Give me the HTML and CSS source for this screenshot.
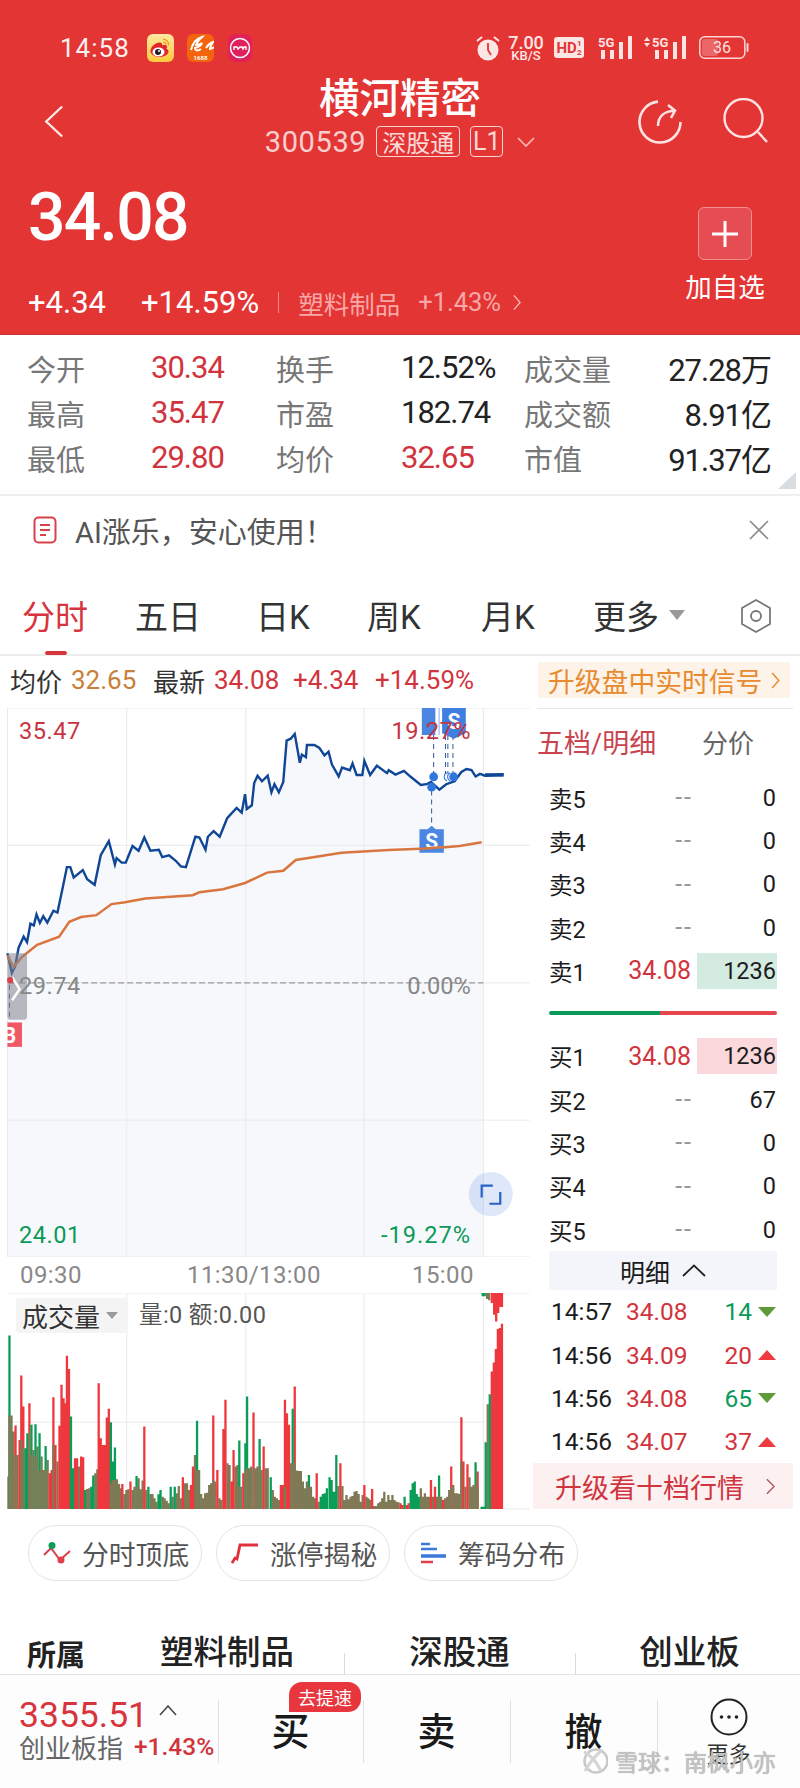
FILE: index.html
```html
<!DOCTYPE html>
<html lang="zh-CN">
<head>
<meta charset="utf-8">
<title>横河精密</title>
<link rel="stylesheet" href="styles.css">
</head>
<body>
<div class="page">
  <header class="hero">
    <div class="status">
      <span class="clock">14:58</span>
      <svg class="app app-weibo" viewBox="0 0 27 28"><defs><linearGradient id="wb" x1="0" y1="0" x2="0" y2="1"><stop offset="0" stop-color="#ffe9a0"/><stop offset="1" stop-color="#fdc93c"/></linearGradient></defs><rect width="27" height="28" rx="6" fill="url(#wb)"/><path d="M3.5 17c0-4 5-8.500 9-8.500 2.500 0 3 1.500 2.500 3 3-1 5-.5 5 1.500 0 .7-.3 1.200-.8 1.700 1.500.5 2.300 1.500 2.300 2.800 0 3-4.500 5.500-9 5.500S3.500 20.500 3.500 17z" fill="#e0262b"/><ellipse cx="11.500" cy="18" rx="6" ry="4.500" fill="#fff"/><circle cx="11" cy="18" r="3" fill="#222"/><circle cx="12" cy="17" r="1" fill="#fff"/><path d="M16 5.500c3-.5 6 2 5.500 6M16.500 8.500c1.500-.2 2.700 1 2.500 2.700" fill="none" stroke="#f39a1c" stroke-width="1.300"/></svg>
      <svg class="app app-ali" viewBox="0 0 27 28"><rect width="27" height="28" rx="6" fill="#f3640c"/><path d="M4 16C6 8 11 4 15 3c-3 3-5 4-6 8 3 0 5-1 6-2-1 3-3 4-7 5 0 3 3 3 6 1M19 14c2-3 4-5 7-6-2 3-3 5-3 7 1 0 2-.5 4-1.500" fill="none" stroke="#fff" stroke-width="2"/><text x="13.500" y="26" class="app-label">1688</text></svg>
      <svg class="app app-ring" viewBox="0 0 24 28"><rect width="24" height="28" rx="8" fill="#e0205a"/><circle cx="12" cy="14" r="9.500" fill="none" stroke="#fff" stroke-width="1.500"/><path d="M6 16v-3h3l1 2 2-2h2l1 2 1-2h2v3" fill="none" stroke="#fff" stroke-width="1.400"/></svg>
      <div class="status-right">
        <svg class="st-alarm" viewBox="0 0 24 26"><circle cx="12" cy="15" r="10.500" fill="#fde7e5"/><path d="M12 8v7l3 5" fill="none" stroke="#e43535" stroke-width="1.800"/><path d="M1 6l5-4M23 6l-5-4" stroke="#fde7e5" stroke-width="2"/></svg>
        <div class="st-net"><span class="st-rate">7.00</span><span class="st-unit">KB/S</span></div>
        <div class="st-hd"><span>HD</span><span class="st-frac">1<br>2</span></div>
        <svg class="st-sig" viewBox="0 0 35 23"><text x="0" y="11" class="sig-label">5G</text><path d="M3 14h4v9H3zM12 14h4v9h-4zM21 6h4v17h-4zM30 0h4v23h-4z" fill="#fde3e2"/></svg>
        <svg class="st-sig2" viewBox="0 0 44 23"><path d="M1 5l3-4 3 4zM1 7l3 4 3-4z" fill="#fde3e2"/><text x="9" y="11" class="sig-label">5G</text><path d="M12 14h4v9h-4zM21 14h4v9h-4zM30 6h4v17h-4zM39 0h4v23h-4z" fill="#fde3e2"/></svg>
        <svg class="st-batt" viewBox="0 0 50 23"><rect x=".8" y=".8" width="45" height="21.400" rx="5" fill="none" stroke="#fbd5d3" stroke-width="1.500"/><rect x="3" y="3" width="16" height="17" rx="3" fill="#fff" fill-opacity=".25"/><rect x="47.500" y="7" width="2" height="9" rx="1" fill="#fbd5d3"/><text x="23" y="17" class="batt-label">36</text></svg>
      </div>
    </div>
    <div class="nav">
      <div class="nav-left">
        <svg class="ic-back" viewBox="0 0 22 36"><path d="M20 1.500L2.500 18 20 34.500" fill="none" stroke="#fde8e6" stroke-width="2.600"/></svg>
      </div>
      <div class="nav-center">
        <h1 class="title">横河精密</h1>
        <div class="code-row">
          <span class="code">300539</span>
          <span class="tag-box tag-wide">深股通</span>
          <span class="tag-box tag-small">L1</span>
          <svg class="ic-caret" viewBox="0 0 18 10"><path d="M1 1l8 8 8-8" fill="none" stroke="#f6bdbb" stroke-width="1.600"/></svg>
        </div>
      </div>
      <div class="nav-right">
        <svg class="ic-refresh" viewBox="0 0 44 44"><path d="M20 1.600A20.500 20.500 0 1 0 42.500 22" fill="none" stroke="#fde3e2" stroke-width="2.600"/><path d="M20 26c0-9 6-15 17-15.500M30 5l7 5.500-4 7.500" fill="none" stroke="#fde3e2" stroke-width="2.600"/></svg>
        <svg class="ic-search" viewBox="0 0 46 46"><circle cx="20.500" cy="20" r="19" fill="none" stroke="#fde3e2" stroke-width="2.400"/><path d="M35 34l9 10" stroke="#fde3e2" stroke-width="2.400"/></svg>
      </div>
    </div>
    <div class="quote">
      <div class="quote-main">
        <div class="last">34.08</div>
        <div class="delta">
          <span class="delta-a">+4.34</span>
          <span class="delta-b">+14.59%</span>
          <span class="sector">塑料制品</span>
          <span class="sector-chg">+1.43%</span>
          <svg class="ic-next" viewBox="0 0 9 18"><path d="M1 1l7 8-7 8" fill="none" stroke="#f6b9b7" stroke-width="1.500"/></svg>
        </div>
      </div>
      <div class="quote-add">
        <div class="add-box"><svg class="ic-plus" viewBox="0 0 28 28"><path d="M14 1v26M1 14h26" stroke="#fff" stroke-width="3"/></svg></div>
        <div class="add-label">加自选</div>
      </div>
    </div>
  </header>

  <section class="stats">
    <span class="lbl">今开</span><span class="val up">30.34</span>
    <span class="lbl">换手</span><span class="val">12.52%</span>
    <span class="lbl">成交量</span><span class="val end">27.28万</span>
    <span class="lbl">最高</span><span class="val up">35.47</span>
    <span class="lbl">市盈</span><span class="val">182.74</span>
    <span class="lbl">成交额</span><span class="val end">8.91亿</span>
    <span class="lbl">最低</span><span class="val up">29.80</span>
    <span class="lbl">均价</span><span class="val up">32.65</span>
    <span class="lbl">市值</span><span class="val end">91.37亿</span>
    <i class="corner"></i>
  </section>

  <section class="notice">
    <svg class="ic-doc" viewBox="0 0 24 28"><rect x="1.500" y="1.500" width="21" height="25" rx="4" fill="none" stroke="#d8404a" stroke-width="2"/><path d="M7 9h10M7 14h10M7 19h6" stroke="#d8404a" stroke-width="2"/></svg>
    <span class="notice-text">AI涨乐，安心使用！</span>
    <svg class="ic-close" viewBox="0 0 20 20"><path d="M1 1l18 18M19 1L1 19" stroke="#8c8c8c" stroke-width="1.700"/></svg>
  </section>

  <nav class="tabs">
    <span class="tab active">分时</span>
    <span class="tab">五日</span>
    <span class="tab">日K</span>
    <span class="tab">周K</span>
    <span class="tab">月K</span>
    <span class="tab">更多<i class="tri"></i></span>
    <svg class="ic-hex" viewBox="0 0 32 34"><path d="M16 1l14 8v16l-14 8-14-8V9z" fill="none" stroke="#777" stroke-width="1.800" stroke-linejoin="round"/><circle cx="16" cy="17" r="5" fill="none" stroke="#777" stroke-width="1.800"/></svg>
  </nav>

  <section class="info">
    <span class="info-k">均价</span><span class="info-avg">32.65</span>
    <span class="info-k k2">最新</span><span class="up i-last">34.08</span>
    <span class="up i-d1">+4.34</span><span class="up i-d2">+14.59%</span>
    <span class="upgrade">升级盘中实时信号<svg class="ic-up-next" viewBox="0 0 9 18"><path d="M1 1l7 8-7 8" fill="none" stroke="#e88a2f" stroke-width="1.500"/></svg></span>
  </section>

  <main class="main">
    <div class="chart-col">
      <div class="chart">
        <svg class="chart-svg" viewBox="0 22 1568 1484" preserveAspectRatio="none">
          <path d="M22 700L35 738 45 720 55 670 70 640 80 655 90 605 100 610 108 580 118 603 128 585 140 602 158 570 170 575 185 510 198 452 208 452 218 480 245 460 258 485 280 500 298 420 322 382 340 445 345 428 360 440 372 440 392 395 410 408 427 372 445 408 470 405 480 425 500 420 520 435 535 450 550 452 578 370 590 372 608 405 615 370 632 355 650 370 672 320 700 292 715 305 725 255 730 295 745 285 752 225 762 205 775 220 792 205 803 250 812 228 825 250 838 222 848 110 860 105 872 92 887 170 893 148 905 155 908 122 930 122 945 130 960 150 972 140 982 175 1002 207 1012 183 1035 190 1043 172 1055 203 1072 203 1078 165 1095 203 1115 178 1145 198 1150 190 1170 202 1195 192 1215 208 1245 230 1262 228 1275 222 1300 243 1320 228 1345 220 1365 195 1380 187 1395 190 1407 207 1420 200 1430 205V1506H22z" fill="#f7f8fc"/>
          <path class="grid" d="M375 22V1506M727 22V1506M1077 22V1506M1430 22V1506M22 393H1568M22 765H1568M22 1136H1568M22 22H1568M22 22V1506M22 1506H1568"/>
          <path class="dash" d="M30 765H1430"/>
          <path class="line-price" d="M22 685L35 738 45 720 55 670 70 640 80 655 90 605 100 610 108 580 118 603 128 585 140 602 158 570 170 575 185 510 198 452 208 452 218 480 245 460 258 485 280 500 298 420 322 382 340 445 345 428 360 440 372 440 392 395 410 408 427 372 445 408 470 405 480 425 500 420 520 435 535 450 550 452 578 370 590 372 608 405 615 370 632 355 650 370 672 320 700 292 715 305 725 255 730 295 745 285 752 225 762 205 775 220 792 205 803 250 812 228 825 250 838 222 848 110 860 105 872 92 887 170 893 148 905 155 908 122 930 122 945 130 960 150 972 140 982 175 1002 207 1012 183 1035 190 1043 172 1055 203 1072 203 1078 165 1095 203 1115 178 1145 198 1150 190 1170 202 1195 192 1215 208 1245 230 1262 228 1275 222 1300 243 1320 228 1345 220 1365 195 1380 187 1395 190 1407 207 1420 200 1435 205 1490 201"/>
          <path class="line-thick" d="M1435 203H1490"/>
          <path class="line-avg" d="M22 690L40 722 65 695 110 662 175 640 205 600 240 587 285 582 330 552 370 547 430 537 570 528 590 520 660 512 725 495 790 467 838 462 875 433 950 422 1010 413 1150 406 1280 401 1360 395 1425 385"/>
          <path class="flag-dash" d="M1283 95V200M1318 95V200M1325 95V200M1340 95V200M1277 245V340M28 770V860"/>
          <path d="M1248 22H1300V95H1248z" fill="#4a86e2"/>
          <path d="M1288 22H1298V95H1288zM1302 22H1306V95H1302z" fill="#fff"/>
          <path d="M1308 22H1378V90L1343 105 1308 90z" fill="#3f7fe0"/>
          <text x="1343" y="78" class="flag-s">S</text>
          <path d="M1241 350H1265L1277 340 1289 350H1313V413H1241z" fill="#4a86e2"/>
          <text x="1277" y="402" class="flag-s">S</text>
          <path class="line-avg" d="M1241 403L1313 398"/>
          <ellipse cx="1283" cy="208" rx="13" ry="12" fill="#2f77dd"/>
          <ellipse cx="1277" cy="236" rx="13" ry="12" fill="#2f77dd"/>
          <path d="M1322 197a13 12 0 0 0 0 22M1332 197a13 12 0 0 0 0 22" fill="none" stroke="#2f77dd" stroke-width="3"/>
          <ellipse cx="1342" cy="208" rx="13" ry="12" fill="#2f77dd"/>
          <rect x="22" y="685" width="58" height="180" rx="10" fill="#84848c" fill-opacity=".55"/>
          <path d="M36 750L58 782 36 812" fill="none" stroke="#fff" stroke-width="2.500" vector-effect="non-scaling-stroke"/>
          <circle cx="30" cy="758" r="9" fill="#e0404c"/>
          <path d="M22 872H65V938H22z" fill="#f25766"/>
          <text x="28" y="928" class="flag-s">B</text>
          <ellipse cx="1452" cy="1336" rx="65" ry="60" fill="#3a78dc" fill-opacity=".17"/>
          <path class="expand" d="M1425 1345V1313H1458M1480 1330V1362H1448"/>
        </svg>
        <span class="ax ax-tl up">35.47</span>
        <span class="ax ax-tr up">19.27%</span>
        <span class="ax ax-ml">29.74</span>
        <span class="ax ax-mr">0.00%</span>
        <span class="ax ax-bl down">24.01</span>
        <span class="ax ax-br down">-19.27%</span>
      </div>
      <div class="times"><span>09:30</span><span>11:30/13:00</span><span>15:00</span></div>
      <div class="vol">
        <svg class="vol-svg" viewBox="0 70 1568 650" preserveAspectRatio="none">
          <path class="grid" d="M375 70V717M727 70V717M1077 70V717M1430 70V717M22 457H1430M22 70H1568M1490 717H1568"/>
          <path class="bar-b" d="M25 717V620M34 717V437M40 717V485M52 717V555M99 717V540M111 717V530M123 717V560M129 717V600M141 717V570M170 717V575M234 717V590M258 717V657M264 717V655M282 717V610M288 717V598M346 717V628M352 717V642M358 717V655M368 717V672M374 717V660M380 717V658M392 717V660M398 717V650M410 717V625M416 717V658M422 717V632M433 717V660M445 717V672M451 717V672M457 717V685M463 717V695M481 717V680M487 717V685M493 717V692M499 717V700M511 717V680M523 717V670M529 717V648M535 717V685M547 717V640M553 717V640M559 717V660M577 717V555M589 717V600M595 717V672M601 717V685M607 717V670M613 717V668M619 717V645M625 717V640M637 717V635M649 717V685M655 717V690M673 717V580M679 717V585M697 717V590M703 717V585M714 717V650M737 717V595M743 717V590M756 717V595M762 717V590M774 717V600M786 717V595M792 717V595M807 717V660M813 717V680M819 717V685M825 717V690M860 717V580M878 717V602M884 717V603M890 717V603M896 717V635M902 717V655M908 717V635M920 717V650M926 717V680M932 717V685M943 717V695M1001 717V648M1013 717V648M1019 717V690M1025 717V675M1031 717V688M1037 717V680M1043 717V678M1049 717V665M1055 717V663M1061 717V672M1067 717V695M1073 717V675M1084 717V680M1090 717V685M1096 717V690M1107 717V708M1113 717V708M1119 717V700M1125 717V695M1131 717V685M1137 717V665M1143 717V695M1149 717V675M1155 717V690M1161 717V675M1167 717V690M1173 717V695M1179 717V697M1245 717V655M1251 717V680M1257 717V670M1263 717V680M1269 717V680M1281 717V680M1293 717V680M1305 717V680M1317 717V685M1323 717V680M1329 717V660M1341 717V645M1347 717V670M1353 717V670M1359 717V672M1377 717V650M1389 717V622M1395 717V650M1401 717V645M1443 717V403"/>
          <path class="bar-r" d="M46 717V467M58 717V510M63 717V317M69 717V410M87 717V400M147 717V610M153 717V600M158 717V382M164 717V525M176 717V468M182 717V345M188 717V385M194 717V400M198 717V258M204 717V298M222 717V565M228 717V565M240 717V560M246 717V562M292 717V340M298 717V505M304 717V525M310 717V525M316 717V443M322 717V417M362 717V642M386 717V635M427 717V470M541 717V622M565 717V645M571 717V590M631 717V437M643 717V600M661 717V477M667 717V390M685 717V635M691 717V540M720 717V610M750 717V428M780 717V530M831 717V645M837 717V645M843 717V390M849 717V430M855 717V465M872 717V350M937 717V610M1007 717V580M1078 717V645M1101 717V657M1185 717V700M1191 717V705M1203 717V705M1209 717V700M1275 717V630M1287 717V650M1311 717V690M1335 717V590M1365 717V442M1371 717V575M1383 717V583M1413 717V605M1455 717V305M1461 717V278M1467 717V238M1473 717V178M1479 717V175M1485 717V162"/>
          <path class="bar-g" d="M28 717V197M75 717V535M81 717V490M93 717V465M105 717V463M117 717V490M135 717V528M210 717V440M216 717V595M252 717V660M270 717V650M276 717V617M328 717V457M334 717V575M340 717V533M404 717V618M439 717V650M469 717V673M475 717V660M505 717V650M517 717V650M583 717V453M708 717V512M726 717V520M731 717V380M768 717V507M801 717V622M866 717V417M914 717V615M949 717V680M955 717V672M961 717V670M967 717V655M975 717V622M981 717V630M987 717V665M993 717V665M995 717V555M1197 717V680M1215 717V660M1221 717V640M1227 717V635M1233 717V672M1239 717V680M1299 717V617M1407 717V577M1425 717V710M1431 717V710M1437 717V517M1449 717V373"/>
          <path class="bar-b" d="M28 717V437M46 717V555M63 717V510M69 717V535M87 717V490M93 717V555M105 717V560M117 717V600M135 717V600M158 717V525M328 717V640M334 717V630M340 717V630M404 717V650M583 717V600M631 717V630M708 717V650M726 717V600M731 717V595M750 717V595M768 717V590M843 717V650M866 717V580M872 717V580M914 717V650M1299 717V680M1335 717V650M1365 717V575M1407 717V645M1413 717V650"/>
          <path class="bar-g" d="M1428 70V80M1434 70V80"/>
          <path class="bar-b" d="M1441 70V88M1447 70V92"/>
          <path class="bar-r" d="M1455 70V100M1462 70V135M1468 70V155M1474 70V130M1480 70V112M1485 70V112"/>
        </svg>
        <div class="vol-chip">成交量<i class="tri tri-sm"></i></div>
        <div class="vol-read">量:0 额:0.00</div>
      </div>
    </div>
    <aside class="book">
      <div class="book-head"><span class="book-tab">五档/明细</span><span class="book-alt">分价</span></div>
      <div class="row"><span>卖5</span><span class="px nil">--</span><span class="qty">0</span></div>
      <div class="row"><span>卖4</span><span class="px nil">--</span><span class="qty">0</span></div>
      <div class="row"><span>卖3</span><span class="px nil">--</span><span class="qty">0</span></div>
      <div class="row"><span>卖2</span><span class="px nil">--</span><span class="qty">0</span></div>
      <div class="row"><span>卖1</span><span class="px up">34.08</span><span class="qty qty-sell">1236</span></div>
      <div class="ratio"><i class="ratio-g"></i><i class="ratio-r"></i></div>
      <div class="row"><span>买1</span><span class="px up">34.08</span><span class="qty qty-buy">1236</span></div>
      <div class="row"><span>买2</span><span class="px nil">--</span><span class="qty">67</span></div>
      <div class="row"><span>买3</span><span class="px nil">--</span><span class="qty">0</span></div>
      <div class="row"><span>买4</span><span class="px nil">--</span><span class="qty">0</span></div>
      <div class="row"><span>买5</span><span class="px nil">--</span><span class="qty">0</span></div>
      <div class="detail-head">明细<svg class="ic-fold" viewBox="0 0 24 13"><path d="M1 12L12 1.500 23 12" fill="none" stroke="#222" stroke-width="1.800"/></svg></div>
      <div class="tick"><span>14:57</span><span class="up">34.08</span><span class="tick-q down">14</span><i class="arr arr-d"></i></div>
      <div class="tick"><span>14:56</span><span class="up">34.09</span><span class="tick-q up">20</span><i class="arr arr-u"></i></div>
      <div class="tick"><span>14:56</span><span class="up">34.08</span><span class="tick-q down">65</span><i class="arr arr-d"></i></div>
      <div class="tick"><span>14:56</span><span class="up">34.07</span><span class="tick-q up">37</span><i class="arr arr-u"></i></div>
      <div class="book-up">升级看十档行情<svg class="ic-bk-next" viewBox="0 0 10 18"><path d="M1 1l8 8-8 8" fill="none" stroke="#a8555c" stroke-width="1.500"/></svg></div>
    </aside>
  </main>

  <section class="pills">
    <div class="pill">
      <svg class="pill-ic" viewBox="0 0 28 22"><path d="M1 13l7-7 9 12 10-9" fill="none" stroke="#d8404a" stroke-width="2"/><circle cx="9" cy="3.500" r="3.500" fill="#0a9d58"/><circle cx="18" cy="18" r="3.500" fill="#e0404c"/></svg>
      <span>分时顶底</span>
    </div>
    <div class="pill">
      <svg class="pill-ic" viewBox="0 0 28 22"><path d="M1 21l3-5 2 1 3-14h18" fill="none" stroke="#e0303c" stroke-width="2.800"/></svg>
      <span>涨停揭秘</span>
    </div>
    <div class="pill">
      <svg class="pill-ic" viewBox="0 0 28 22"><path d="M2 2h9M2 7h16" stroke="#3b78d8" stroke-width="2.500"/><path d="M2 14h25" stroke="#3b78d8" stroke-width="3.500"/><path d="M2 20h12" stroke="#e0404c" stroke-width="2.500"/></svg>
      <span>筹码分布</span>
    </div>
  </section>

  <section class="tags">
    <span class="tags-k">所属</span>
    <span class="tags-v">塑料制品</span>
    <span class="tags-v tv-line">深股通</span>
    <span class="tags-v tv-line">创业板</span>
  </section>

  <footer class="bar">
    <div class="idx">
      <div class="idx-top"><span class="idx-num">3355.51</span><svg class="ic-idx" viewBox="0 0 18 11"><path d="M1 10l8-9 8 9" fill="none" stroke="#444" stroke-width="1.500"/></svg></div>
      <div class="idx-sub"><span class="idx-name">创业板指</span><span class="idx-chg up">+1.43%</span></div>
    </div>
    <div class="act">买<span class="badge">去提速</span></div>
    <div class="act">卖</div>
    <div class="act">撤</div>
    <div class="more">
      <svg class="ic-more" viewBox="0 0 38 38"><circle cx="19" cy="19" r="17.500" fill="none" stroke="#222" stroke-width="2"/><circle cx="11.500" cy="19" r="1.800" fill="#222"/><circle cx="19" cy="19" r="1.800" fill="#222"/><circle cx="26.500" cy="19" r="1.800" fill="#222"/></svg>
      <span>更多</span>
    </div>
    <div class="mark">
      <svg class="mark-ic" viewBox="0 0 27 28"><circle cx="15" cy="14" r="11.500" fill="none" stroke="#c9c9c9" stroke-width="2.500"/><path d="M3 5c7 3 12 9 17 19M20 4C14 9 9 15 4 24" fill="none" stroke="#d5d5d5" stroke-width="3"/></svg>
      <span>雪球：南枫小亦</span>
    </div>
  </footer>
</div>
</body>
</html>
```

FILE: styles.css
```css
* { box-sizing: border-box; }
html, body { margin: 0; padding: 0; background: #fff; }
body { font-family: Roboto, "Noto Sans CJK SC", sans-serif; color: #222; }
.page { width: 800px; height: 1788px; overflow: hidden; }
i { display: block; }
.up { color: #d1343c; }
.down { color: #0a9a58; }

/* header */
.hero { height: 335px; background: #e43535; color: #fff; padding-top: 33px; border-bottom: 1px solid #c43034; }
.status { display: flex; align-items: center; height: 29px; padding: 0 51px 0 60px; }
.clock { width: 69px; margin-right: 18px; font-size: 26px; letter-spacing: 1px; color: #fdf1f0; }
.app { display: block; height: 28px; }
.app-weibo, .app-ali { width: 27px; margin-right: 13px; }
.app-ali { margin-right: 14px; }
.app-ring { width: 24px; }
.app-label { font-size: 6px; fill: #fff; text-anchor: middle; font-weight: 700; }
.status-right { display: flex; align-items: center; margin-left: auto; color: #fde7e5; }
.st-alarm { width: 24px; height: 26px; margin-right: 9px; }
.st-net { width: 34px; margin-right: 11px; display: flex; flex-direction: column; align-items: center; }
.st-rate { font-size: 18px; line-height: 15px; font-weight: 500; }
.st-unit { font-size: 13px; line-height: 11px; font-weight: 500; }
.st-hd { width: 30px; height: 21px; margin-right: 14px; background: #fde7e5; color: #e43535; border-radius: 3px; display: flex; align-items: center; justify-content: center; font-size: 15px; font-weight: 700; }
.st-frac { font-size: 8px; line-height: 9px; text-align: center; }
.st-sig { width: 35px; height: 23px; margin-right: 10px; }
.st-sig2 { width: 44px; height: 23px; margin-right: 12px; }
.sig-label { font-size: 13px; font-weight: 700; fill: #fde3e2; }
.st-batt { width: 50px; height: 23px; }
.batt-label { font-size: 16px; fill: #fde3e2; text-anchor: middle; }

.nav { display: grid; grid-template-columns: 1fr 270px 1fr; height: 80px; margin-top: 15px; }
.nav-left { padding: 27px 0 0 44px; }
.ic-back { display: block; width: 20px; height: 35px; }
.nav-center { display: flex; flex-direction: column; align-items: center; }
.title { margin: 2px 0 0; font-size: 40.500px; line-height: 40px; font-weight: 500; color: #fff; }
.code-row { display: flex; align-items: center; height: 31px; margin-top: 7px; color: #f8cfcd; }
.code { font-size: 29px; letter-spacing: .600px; margin-right: 10px; }
.tag-box { height: 31px; border: 1.500px solid #f9d6d4; border-radius: 4px; display: flex; align-items: center; justify-content: center; font-size: 24px; color: #fbdcda; }
.tag-wide { width: 84px; margin-right: 10px; }
.tag-small { width: 33px; margin-right: 14px; font-size: 25px; }
.ic-caret { width: 18px; height: 10px; }
.nav-right { display: flex; justify-content: flex-end; padding: 23px 31px 0 0; gap: 41px; }
.ic-refresh { width: 44px; height: 44px; }
.ic-search { width: 46px; height: 46px; margin-top: -2px; }

.quote { display: flex; justify-content: space-between; margin-top: 29px; padding: 0 35px 0 28px; }
.last { font-size: 66px; line-height: 64px; font-weight: 500; letter-spacing: -1.700px; color: #fff; }
.delta { display: flex; align-items: center; height: 32px; margin-top: 36px; }
.delta-a { width: 113px; font-size: 31px; }
.delta-b { font-size: 31px; padding-right: 20px; margin-right: 19px; background: linear-gradient(#f08a88, #f08a88) right center / 1px 21px no-repeat; }
.sector { font-size: 25.500px; color: #f7a8a6; margin-right: 18px; }
.sector-chg { font-size: 25.500px; color: #f7a8a6; margin-right: 12px; }
.ic-next { width: 8px; height: 17px; }
.quote-add { width: 80px; display: flex; flex-direction: column; align-items: center; padding-top: 21px; }
.add-box { width: 54px; height: 53px; background: #e64d52; border: 1.500px solid #f08f90; border-radius: 6px; display: flex; align-items: center; justify-content: center; }
.ic-plus { width: 28px; height: 28px; }
.add-label { margin-top: 13px; font-size: 26.500px; line-height: 30px; color: #fff; white-space: nowrap; }

/* stats */
.stats { position: relative; display: grid; grid-template-columns: 124px 125px 125px 123px 107px 1fr; grid-auto-rows: 45px; align-items: center; height: 161px; padding: 10px 29px 0 27px; border-bottom: 2px solid #eeeeee; font-size: 31px; letter-spacing: -1px; }
.lbl { color: #777; font-size: 29px; letter-spacing: 0; }
.val { color: #222; }
.val.up { color: #d1343c; }
.end { text-align: right; white-space: nowrap; }
.corner { position: absolute; right: 4px; bottom: 5px; width: 18px; height: 17px; background: #d8dde2; clip-path: polygon(100% 0, 100% 100%, 0 100%); }

.notice { display: flex; align-items: center; height: 68px; padding: 0 31px 0 33px; }
.ic-doc { width: 24px; height: 28px; margin-right: 18px; }
.notice-text { font-size: 29px; color: #555; }
.ic-close { width: 20px; height: 20px; margin-left: auto; }

.tabs { position: relative; display: grid; grid-template-columns: 113px 121px 111px 114px 112px 147px 1fr; align-items: center; height: 92px; padding: 12px 0 0 22px; border-bottom: 2px solid #ececec; font-size: 33px; color: #333; }
.tab { display: flex; align-items: center; }
.tab.active { color: #d8343e; }
.tab.active::after { content: ""; position: absolute; left: 45px; bottom: -1px; width: 22px; height: 4px; border-radius: 2px; background: #d8343e; }
.tri { width: 0; height: 0; margin-left: 10px; border-left: 8px solid transparent; border-right: 8px solid transparent; border-top: 10px solid #999; }
.ic-hex { width: 32px; height: 34px; margin-top: 2px; }

.info { display: flex; align-items: center; height: 48px; margin-bottom: 4px; padding-left: 10px; font-size: 26px; white-space: nowrap; }
.info-k { color: #333; width: 61px; }
.info-k.k2 { width: 61px; }
.info-avg { color: #c8803a; width: 82px; }
.i-last { width: 79px; }
.i-d1 { width: 82px; }
.i-d2 { width: 163px; }
.upgrade { display: flex; align-items: center; width: 252px; height: 36px; padding-left: 10px; background: #fdf3e8; color: #e88a2f; font-size: 26.800px; }
.ic-up-next { width: 9px; height: 17px; margin-left: 9px; }

/* main */
.main { display: flex; height: 802px; }
.chart-col { width: 530px; }
.chart { position: relative; width: 530px; height: 549px; }
.chart-svg, .vol-svg { display: block; width: 100%; height: 100%; }
.grid { fill: none; stroke: #e8e9ee; stroke-width: 1; vector-effect: non-scaling-stroke; }
.dash { fill: none; stroke: #999; stroke-width: 1.200; stroke-dasharray: 6 3; vector-effect: non-scaling-stroke; }
.line-price { fill: none; stroke: #0f4696; stroke-width: 2.400; vector-effect: non-scaling-stroke; }
.line-thick { fill: none; stroke: #0f4696; stroke-width: 3.500; vector-effect: non-scaling-stroke; }
.line-avg { fill: none; stroke: #d9763f; stroke-width: 2.500; vector-effect: non-scaling-stroke; }
.flag-dash { fill: none; stroke: #2a5a9a; stroke-width: 1; stroke-dasharray: 5 4; vector-effect: non-scaling-stroke; }
.flag-s { font-size: 62px; font-weight: 700; fill: #fff; text-anchor: middle; }
.expand { fill: none; stroke: #2a62c4; stroke-width: 2.200; vector-effect: non-scaling-stroke; }
.ax { position: absolute; font-size: 23.600px; line-height: 28px; color: #888; letter-spacing: .500px; }
.ax.up { color: #c8343f; }
.ax.down { color: #0a9a58; }
.ax-tl { left: 19px; top: 9px; }
.ax-tr { right: 59px; top: 9px; }
.ax-ml { left: 19px; top: 264px; }
.ax-mr { right: 59px; top: 264px; letter-spacing: .100px; }
.ax-bl { left: 19px; top: 513px; }
.ax-br { right: 59px; top: 513px; letter-spacing: 1px; }
.times { display: grid; grid-template-columns: 167px 225px auto; align-items: center; height: 36px; padding-left: 20px; font-size: 24px; letter-spacing: .400px; color: #888; }
.vol { position: relative; height: 217px; }
.bar-r, .bar-g, .bar-b { fill: none; stroke-width: 6.800; }
.bar-r { stroke: #ef383d; }
.bar-g { stroke: #0a9d58; }
.bar-b { stroke: #7f7a55; }
.vol-chip { position: absolute; left: 16px; top: 5px; display: flex; align-items: center; width: 112px; height: 35px; padding-left: 6px; background: #f4f4f4; border-radius: 3px; font-size: 26px; color: #333; }
.tri-sm { margin-left: 6px; border-left-width: 6px; border-right-width: 6px; border-top-width: 7px; }
.vol-read { position: absolute; left: 139px; top: 7px; font-size: 23.500px; line-height: 30px; letter-spacing: .400px; color: #555; white-space: nowrap; }

/* order book */
.book { width: 270px; padding-left: 19px; font-size: 24px; color: #1c1c1c; }
.book-head { display: flex; align-items: center; height: 68px; padding-bottom: 2px; margin-left: -12px; margin-right: 7px; background: linear-gradient(#e8e8e8, #e8e8e8) top / 100% 1px no-repeat; }
.book-tab { width: 165px; font-size: 27px; color: #c8434e; white-space: nowrap; }
.book-alt { font-size: 26px; color: #666; }
.row { display: grid; grid-template-columns: 60px 82px 86px; align-items: center; height: 43.330px; font-size: 23.500px; }
.px { text-align: right; font-size: 25px; }
.nil { color: #999; letter-spacing: 2px; margin-right: -2px; }
.qty { justify-self: end; width: 80px; line-height: 36px; text-align: right; padding-right: 1px; }
.qty-sell { background: #d4ebe2; }
.qty-buy { background: #fbd8dc; }
.ratio { display: flex; width: 228px; height: 4px; margin: 18px 0 20px; border-radius: 2px; overflow: hidden; }
.ratio-g { width: 111px; background: #0a9a58; }
.ratio-r { flex: 1; background: #e8464e; }
.detail-head { display: flex; align-items: center; justify-content: center; gap: 12px; width: 228px; height: 39px; background: #f4f5fa; font-size: 25px; }
.ic-fold { width: 24px; height: 13px; }
.tick { display: grid; grid-template-columns: 75px 62px 64px 24px; align-items: center; height: 43.250px; padding-left: 2px; font-size: 24.500px; }
.tick-q { text-align: right; }
.arr { justify-self: end; width: 0; height: 0; border-left: 9.500px solid transparent; border-right: 9.500px solid transparent; }
.arr-d { border-top: 10px solid #5f9a3a; }
.arr-u { border-bottom: 10px solid #ee3b40; }
.book-up { display: flex; align-items: center; height: 46px; margin-left: -16px; margin-right: 7px; padding: 0 18px 0 22px; background: #fdf0f1; color: #d0353f; font-size: 27px; justify-content: space-between; }
.ic-bk-next { width: 9px; height: 17px; }

/* pills */
.pills { display: flex; gap: 14px; margin-top: 15px; padding-left: 28px; }
.pill { display: flex; align-items: center; width: 174px; height: 56px; padding-left: 14px; border: 1px solid #e4e4e4; border-radius: 28px; font-size: 26.800px; color: #555; white-space: nowrap; }
.pill-ic { width: 28px; height: 22px; margin-right: 11px; flex: none; }

.tags { display: grid; grid-template-columns: 110px 234px 231px 1fr; align-items: stretch; height: 94px; padding-top: 50px; border-bottom: 1px solid #e4e4e4; }
.tags-k { padding-left: 27px; font-size: 29px; font-weight: 700; line-height: 50px; }
.tags-v { text-align: center; font-size: 33.500px; font-weight: 500; line-height: 44px; color: #222; }
.tv-line { background: linear-gradient(#dcdcdc, #dcdcdc) left bottom / 1px 28px no-repeat; }
.tags-v:last-child { padding-left: 4px; }

/* bottom bar */
.bar { position: relative; display: grid; grid-template-columns: 218px 145px 147px 147px 1fr; height: 113px; background: #fdfdfd; }
.idx { padding: 19.500px 0 0 19px; }
.idx-top { display: flex; align-items: center; height: 40px; }
.idx-num { font-size: 35.500px; color: #d8343e; }
.ic-idx { width: 18px; height: 11px; margin-left: 11px; margin-top: -8px; }
.idx-sub { display: flex; align-items: center; height: 30px; margin-top: -3px; white-space: nowrap; }
.idx-name { width: 115px; font-size: 26px; color: #666; }
.idx-chg { font-size: 24.500px; font-weight: 500; }
.act, .more { position: relative; background: linear-gradient(#e0e0e0, #e0e0e0) left 25px / 1px 63px no-repeat; }
.act { display: flex; align-items: center; justify-content: center; padding-bottom: 6px; font-size: 38px; font-weight: 500; color: #1a1a1a; }
.badge { position: absolute; left: 71px; top: 7px; width: 72px; height: 30px; display: flex; align-items: center; justify-content: center; background: #e8363f; border-radius: 13px 13px 13px 0; color: #fff; font-size: 18px; font-weight: 400; }
.more { display: flex; flex-direction: column; align-items: center; padding-top: 23px; font-size: 22px; color: #333; }
.ic-more { width: 38px; height: 38px; }
.more span { margin-top: 5px; line-height: 28px; }
.mark { position: absolute; left: 581px; top: 69px; display: flex; align-items: center; gap: 7px; font-size: 23px; color: #c4c4c4; text-shadow: 0 0 1px #888; white-space: nowrap; }
.mark-ic { width: 27px; height: 28px; }
```
